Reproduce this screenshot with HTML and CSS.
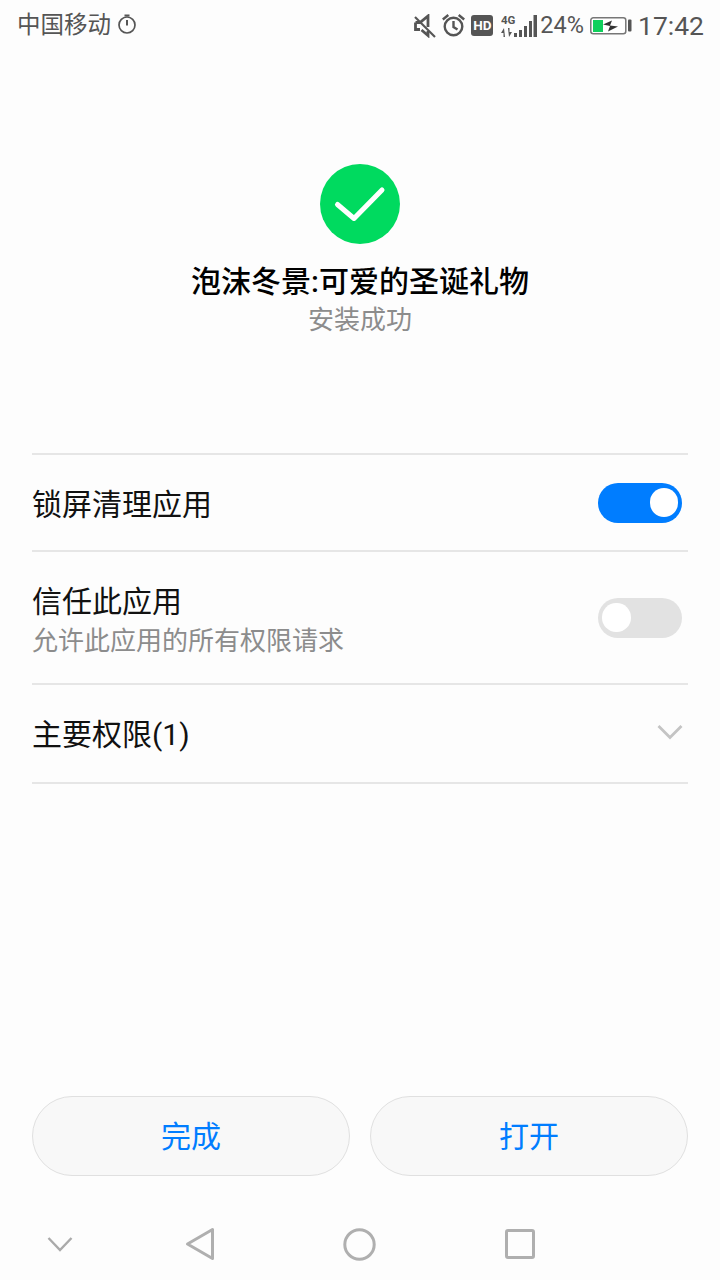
FILE: index.html
```html
<!DOCTYPE html>
<html lang="zh">
<head>
<meta charset="utf-8">
<title>安装成功</title>
<link rel="stylesheet" href="styles.css">
</head>
<body>
<div class="page">
  <header class="status">
    <div class="status-left">
      <span class="carrier">中国移动</span>
      <svg class="ic-timer" width="20" height="22" viewBox="0 0 20 22"><circle cx="10" cy="12" r="8" fill="none" stroke="#555" stroke-width="1.700"/><path d="M7.500 2.500h5M10 7v5.500" fill="none" stroke="#555" stroke-width="2"/></svg>
    </div>
    <div class="status-right">
      <svg class="ic-mute" width="22" height="24" viewBox="0 0 22 24"><path d="M1.500 8.500h4.500l8-6.500v11M6 15.500H1.500v-7M7.500 16l6.500 5.500V17" fill="none" stroke="#555" stroke-width="2.800"/><path d="M1 3l20 20" stroke="#555" stroke-width="2.200"/></svg>
      <svg class="ic-alarm" width="23" height="24" viewBox="0 0 23 24"><circle cx="11.500" cy="13.500" r="8.800" fill="none" stroke="#555" stroke-width="2.400"/><path d="M11.500 8v6l4 2.500M0.800 6.500l5.500-4.500M22.200 6.500L16.700 2" fill="none" stroke="#555" stroke-width="2.400"/></svg>
      <span class="hd">HD</span>
      <svg class="ic-signal" width="36" height="24" viewBox="0 0 36 24"><text class="net" x="0" y="10">4G</text><path d="M3 14l-3 5h2.500v4h1.500zM8 23l3-5H8.500v-4H7z" fill="#555"/><path d="M13 19h3v4h-3zM18 16h3v7h-3zM23 12h3v11h-3zM28 7h3v16h-3zM32.500 1h3.500v22h-3.500z" fill="#555"/></svg>
      <span class="pct">24%</span>
      <svg class="ic-batt" width="42" height="20" viewBox="0 0 42 20"><rect x="0.800" y="1.800" width="35" height="16" rx="2.500" fill="#fff" stroke="#777" stroke-width="1.500"/><rect x="3" y="4" width="10" height="12" fill="#0fd05c"/><rect x="38" y="3.500" width="3.500" height="12" rx="1" fill="#555"/><path d="M13 8.500l9-4-2 5 8 1-10 5 2-5.500z" fill="#333"/></svg>
      <span class="time">17:42</span>
    </div>
  </header>

  <section class="result">
    <svg class="check" width="80" height="80" viewBox="0 0 80 80"><circle cx="40" cy="40" r="40" fill="#00da5f"/><path d="M17.500 40.500L34 54.500 62 26" fill="none" stroke="#fff" stroke-width="5" stroke-linecap="round" stroke-linejoin="round"/></svg>
    <h1 class="app">泡沫冬景:可爱的圣诞礼物</h1>
    <p class="state">安装成功</p>
  </section>

  <section class="list">
    <div class="row row-a">
      <span class="label">锁屏清理应用</span>
      <span class="switch on"><span class="knob"></span></span>
    </div>
    <div class="row row-b">
      <div class="stack">
        <span class="label">信任此应用</span>
        <span class="hint">允许此应用的所有权限请求</span>
      </div>
      <span class="switch"><span class="knob"></span></span>
    </div>
    <div class="row row-c">
      <span class="label">主要权限(1)</span>
      <svg class="chev" width="26" height="16" viewBox="0 0 26 16"><path d="M1.500 2L13 13.500 24.500 2" fill="none" stroke="#c4c4c4" stroke-width="2.800"/></svg>
    </div>
  </section>

  <footer class="actions">
    <button class="btn">完成</button>
    <button class="btn">打开</button>
  </footer>

  <nav class="navbar">
    <svg class="nav-hide" width="26" height="16" viewBox="0 0 26 16"><path d="M1.500 2L13 14 24.500 2" fill="none" stroke="#aaa" stroke-width="2.400"/></svg>
    <svg class="nav-back" width="30" height="34" viewBox="0 0 30 34"><path d="M27.500 2.500v29L2.500 17z" fill="none" stroke="#afafaf" stroke-width="3" stroke-linejoin="round"/></svg>
    <svg class="nav-home" width="33" height="33" viewBox="0 0 33 33"><circle cx="16.500" cy="16.500" r="14.700" fill="none" stroke="#afafaf" stroke-width="3"/></svg>
    <svg class="nav-recent" width="30" height="30" viewBox="0 0 30 30"><rect x="1.500" y="1.500" width="27" height="27" rx="1.500" fill="none" stroke="#afafaf" stroke-width="3"/></svg>
  </nav>
</div>
</body>
</html>
```

FILE: styles.css
```css
* { box-sizing: border-box; }
html, body { margin: 0; padding: 0; }
body {
  background: #fdfdfd;
  font-family: "Roboto", "Noto Sans CJK SC", sans-serif;
}
.page {
  width: 720px;
  height: 1280px;
  display: flex;
  flex-direction: column;
  overflow: hidden;
}
.status {
  height: 50px;
  display: flex;
  justify-content: space-between;
  align-items: center;
  padding: 0 16px 0 17px;
  color: #555;
}
.status-left, .status-right { display: flex; align-items: center; }
.carrier { font-size: 23.500px; line-height: 50px; }
.ic-timer { margin-left: 6px; margin-top: -2px; }
.ic-mute { margin-top: 1px; }
.ic-alarm { margin-left: 6px; }
.hd {
  margin-left: 6px;
  width: 22px;
  height: 21px;
  border-radius: 3px;
  background: #555;
  color: #fff;
  font: 700 13.500px/21px "Roboto", sans-serif;
  text-align: center;
}
.ic-signal { margin-left: 8px; margin-top: 1px; flex: none; }
.net { font: 700 11.500px "Roboto", sans-serif; fill: #555; }
.pct { font-size: 23.500px; margin-left: 3px; }
.ic-batt { margin-left: 6px; margin-top: 1px; }
.time { font-size: 26.500px; margin-left: 6px; }

.result {
  display: flex;
  flex-direction: column;
  align-items: center;
  padding-top: 114px;
  height: 403px;
}
.check { display: block; }
.app {
  margin: 18px 0 0;
  font-size: 30px;
  line-height: 40px;
  font-weight: 500;
  color: #000;
}
.state {
  margin: 0;
  font-size: 26px;
  line-height: 36px;
  color: #8c8c8c;
}

.list { margin: 0 32px; border-top: 2px solid #e6e6e6; }
.row {
  display: flex;
  align-items: center;
  justify-content: space-between;
  border-bottom: 2px solid #e6e6e6;
}
.row-a { height: 97px; }
.row-b { height: 133px; }
.row-c { height: 99px; }
.stack { display: flex; flex-direction: column; padding-top: 6px; }
.label { font-size: 30px; line-height: 40px; color: #111; }
.row-a > .label { padding-top: 5px; }
.row-c > .label { padding-top: 3px; }
.hint { font-size: 26px; line-height: 36px; color: #8c8c8c; padding-top: 1px; }
.switch {
  width: 84px;
  height: 40px;
  margin-right: 6px;
  border-radius: 20px;
  background: #e2e2e2;
  padding: 5.750px 4px;
  display: flex;
  justify-content: flex-start;
}
.switch.on { background: #007dff; justify-content: flex-end; }
.knob { width: 28.500px; height: 28.500px; border-radius: 50%; background: #fff; }
.chev { margin-right: 5px; margin-bottom: 4px; }

.actions {
  margin-top: auto;
  padding: 0 32px;
  display: flex;
  gap: 20px;
}
.btn {
  flex: 1;
  height: 80px;
  border: 1.500px solid #e0e0e0;
  border-radius: 40px;
  background: #f8f8f8;
  color: #007dff;
  padding-top: 2px;
  font: 30px/1 "Roboto", "Noto Sans CJK SC", sans-serif;
}
.navbar {
  height: 104px;
  flex: none;
  display: flex;
  align-items: center;
}
.navbar svg { display: block; margin-top: 32px; }
.nav-hide { margin-left: 47px; }
.nav-back { margin-left: 112px; }
.nav-home { margin-left: 128px; }
.nav-recent { margin-left: 129px; }
```
